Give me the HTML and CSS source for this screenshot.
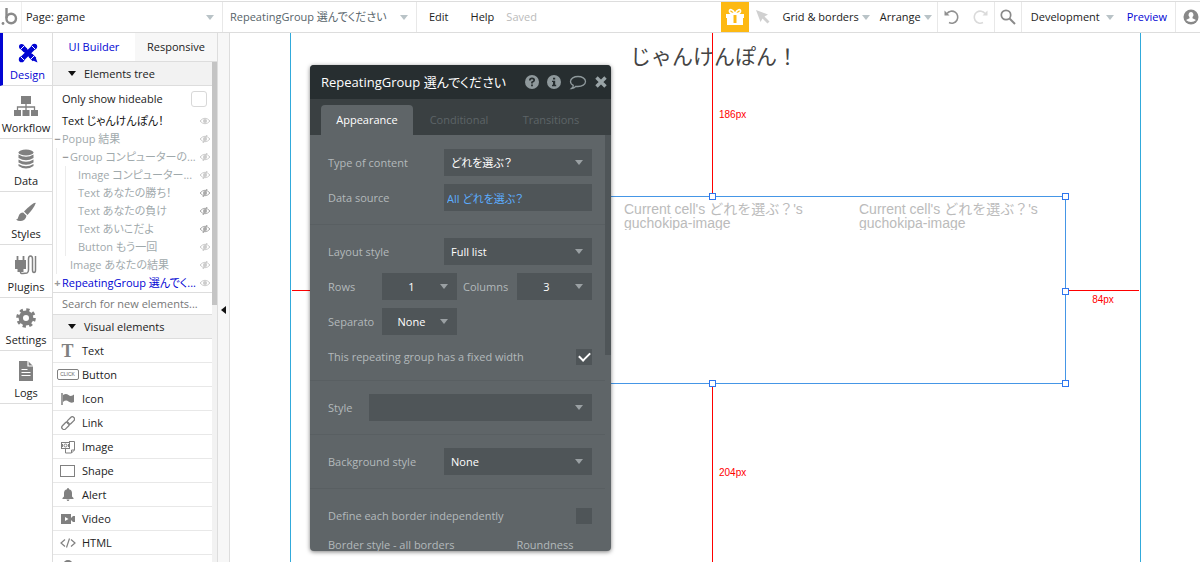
FILE: index.html
```
<!DOCTYPE html>
<html lang="ja">
<head>
<meta charset="utf-8">
<title>Page: game</title>
<link rel="stylesheet" href="styles.css">
</head>
<body>
<svg class="defs" width="0" height="0" aria-hidden="true">
  <symbol id="eye" viewBox="0 0 12 8"><path d="M1 4Q6-1.500 11 4Q6 9.500 1 4Z" fill="none" stroke="currentColor"/><circle cx="6" cy="4" r="2" fill="currentColor"/></symbol>
  <symbol id="eye-off" viewBox="0 0 12 8"><path d="M1 4Q6-1.500 11 4Q6 9.500 1 4Z" fill="none" stroke="currentColor"/><circle cx="6" cy="4" r="2" fill="currentColor"/><path d="M4 8L8 0" stroke="currentColor" stroke-width="1.300"/></symbol>
</svg>

<header class="topbar">
  <a class="logo" href="#" aria-label="Home"><svg width="18" height="20" viewBox="0 0 18 20"><path d="M6.500 1V11" stroke="#8a8a8a" stroke-width="2.400" fill="none"/><circle cx="11.200" cy="11.500" r="4.800" fill="none" stroke="#8a8a8a" stroke-width="2.400"/><circle cx="3" cy="16.500" r="1.400" fill="#8a8a8a"/></svg></a>
  <label class="pick pick-page"><select aria-label="Page"><option>Page: game</option></select></label>
  <label class="pick pick-element"><select aria-label="Element"><option>RepeatingGroup 選んでください</option></select></label>
  <nav class="menu">
    <button type="button">Edit</button>
    <button type="button">Help</button>
    <span class="saved">Saved</span>
  </nav>
  <button class="gift" type="button" aria-label="Gifts"><svg width="20" height="18" viewBox="0 0 20 18"><path d="M1 6h18v4h-1v7H2v-7H1z" fill="#fff"/><path d="M8.500 7h3v8h-3z" fill="#fdb913"/><path d="M10 6C8 1 4 .500 4.500 3.500 5 6 8 5.500 10 6ZM10 6C12 1 16 .500 15.500 3.500 15 6 12 5.500 10 6Z" fill="none" stroke="#fff" stroke-width="1.600"/></svg></button>
  <button class="tool pointer" type="button" aria-label="Pointer"><svg width="14" height="14" viewBox="0 0 14 14"><path d="M0 0L12 4.500 8.500 6.500 13.500 11.500 11.500 13.500 6.500 8.500 4.500 12Z" fill="#d0d0d0"/></svg></button>
  <button class="drop" type="button">Grid &amp; borders</button>
  <button class="drop" type="button">Arrange</button>
  <div class="group history">
    <button class="tool" type="button" aria-label="Undo"><svg width="16" height="16" viewBox="0 0 16 16"><path d="M3 4.500A6 6 0 1 1 5 13.500" fill="none" stroke="#909090" stroke-width="1.600"/><path d="M.500 1.500V6.500H5.500Z" fill="#909090"/></svg></button>
    <button class="tool" type="button" aria-label="Redo"><svg width="16" height="16" viewBox="0 0 16 16"><path d="M13 4.500A6 6 0 1 0 11 13.500" fill="none" stroke="#dadada" stroke-width="1.600"/><path d="M15.500 1.500V6.500H10.500Z" fill="#dadada"/></svg></button>
  </div>
  <div class="group search"><button class="tool" type="button" aria-label="Search"><svg width="16" height="16" viewBox="0 0 16 16"><circle cx="6" cy="6" r="4.700" fill="none" stroke="#8a8a8a" stroke-width="1.700"/><path d="M9.500 9.500L15 15" stroke="#8a8a8a" stroke-width="2"/></svg></button></div>
  <div class="group deploy"><button class="drop" type="button">Development</button><a class="preview" href="#">Preview</a></div>
  <div class="group account"><button class="tool" type="button" aria-label="Account"><svg width="16" height="16" viewBox="0 0 16 16"><circle cx="8" cy="8" r="7.500" fill="#888"/><path d="M8 3a2.600 2.800 0 0 1 1.500 5V9.200L13 11Q11 13 8 13T3 11L6.500 9.200V8A2.600 2.800 0 0 1 8 3Z" fill="#fff"/></svg></button></div>
</header>

<div class="workspace">
  <nav class="rail">
    <a class="active" href="#"><svg width="20" height="20" viewBox="0 0 20 20"><path d="M3.500 3.500L16.500 16.500" stroke="#0205d3" stroke-width="5"/><path d="M16.500 3.500L3.500 16.500" stroke="#fff" stroke-width="7"/><path d="M16 4L4 16" stroke="#0205d3" stroke-width="5"/><path d="M6 6L14 14" stroke="#0205d3" stroke-width="4.500"/><path d="M14 17L19.500 19.500 17.500 14Z" fill="#0205d3"/><circle cx="3.600" cy="3.600" r="2.600" fill="#0205d3"/><circle cx="16.400" cy="3.600" r="2.800" fill="#0205d3"/><circle cx="3.600" cy="16.400" r="2.800" fill="#0205d3"/><path d="M3 6L6 3M14 3L17 6M3 14L6 17M13 16L16 13" stroke="#fff"/></svg>Design</a>
    <a href="#"><svg width="24" height="20" viewBox="0 0 24 20"><path d="M7 0h10v8H7zM0 14h7v6H0zM8.500 14h7v6h-7zM17 14h7v6h-7z" fill="#808080"/><path d="M12 8V14M3.500 14V11H20.500V14" fill="none" stroke="#808080" stroke-width="1.300"/></svg>Workflow</a>
    <a href="#"><svg width="16" height="20" viewBox="0 0 16 20"><ellipse cx="8" cy="3.500" rx="7.500" ry="3" fill="#808080"/><path d="M.500 5.500Q8 10 15.500 5.500V9Q8 13.500 .500 9ZM.500 10.500Q8 15 15.500 10.500V13.500Q8 18 .500 13.500ZM.500 15Q8 19.500 15.500 15V17Q8 22 .500 17Z" fill="#808080"/></svg>Data</a>
    <a href="#"><svg width="20" height="20" viewBox="0 0 20 20"><path d="M19.800 1Q18-.500 8 9.500L11.500 13Q18 6 19.800 1Z" fill="#808080"/><path d="M7.200 10.500L10.500 13.800Q9.500 18.500 5 19 2 19.300 0 17.500 2.200 17 2.500 14.500 3.500 10.500 7.200 10.500Z" fill="#808080"/></svg>Styles</a>
    <a href="#"><svg width="22" height="20" viewBox="0 0 22 20"><path d="M2.500 1v5M8.500 1v5" stroke="#808080" stroke-width="1.800"/><path d="M0 5h11v9H8.500v3h-6v-3H0z" fill="#808080"/><path d="M5.500 17Q5.500 19 8 18.500L12 18Q13.500 17.500 13.500 15V4Q13.500 1 15.500 1T17.500 4V15Q17.500 17.500 19 17.500T20.500 15V1" fill="none" stroke="#808080" stroke-width="1.500"/></svg>Plugins</a>
    <a href="#"><svg width="20" height="20" viewBox="0 0 20 20"><circle cx="10" cy="10" r="5.200" fill="none" stroke="#808080" stroke-width="4.400"/><circle cx="10" cy="10" r="8.300" fill="none" stroke="#808080" stroke-width="3" stroke-dasharray="3.260 3.260"/></svg>Settings</a>
    <a href="#"><svg width="16" height="20" viewBox="0 0 16 20"><path d="M1 0h9l5 5v15H1z" fill="#808080"/><path d="M10 0v5h5M3.500 8.500h6M3.500 11.500h9M3.500 14.500h9" fill="none" stroke="#fff" stroke-width="1.200"/></svg>Logs</a>
  </nav>

  <aside class="palette">
    <div class="tabs"><button class="on" type="button">UI Builder</button><button type="button">Responsive</button></div>
    <div class="scroller">
      <div class="content">
        <h2>Elements tree</h2>
        <label class="hideable">Only show hideable<input type="checkbox"></label>
        <ul class="tree">
          <li class="visible"><span>Text じゃんけんぽん！</span><svg class="eye"><use href="#eye"/></svg></li>
          <li><i>−</i><span>Popup 結果</span><svg class="eye"><use href="#eye-off"/></svg></li>
          <li class="d1"><i>−</i><span>Group コンピューターの...</span><svg class="eye"><use href="#eye-off"/></svg></li>
          <li class="d2"><span>Image コンピューター...</span><svg class="eye"><use href="#eye-off"/></svg></li>
          <li class="d2"><span>Text あなたの勝ち！</span><svg class="eye strong"><use href="#eye-off"/></svg></li>
          <li class="d2"><span>Text あなたの負け</span><svg class="eye strong"><use href="#eye-off"/></svg></li>
          <li class="d2"><span>Text あいこだよ</span><svg class="eye strong"><use href="#eye-off"/></svg></li>
          <li class="d2"><span>Button もう一回</span><svg class="eye"><use href="#eye-off"/></svg></li>
          <li class="d1 last"><span>Image あなたの結果</span><svg class="eye"><use href="#eye-off"/></svg></li>
          <li class="selected"><i>+</i><span>RepeatingGroup 選んでく...</span><svg class="eye"><use href="#eye"/></svg></li>
        </ul>
        <input class="find" type="text" placeholder="Search for new elements..." aria-label="Search for new elements">
        <h2>Visual elements</h2>
        <ul class="elements">
          <li><span class="glyph serif">T</span>Text</li>
          <li><span class="glyph"><b class="click">CLICK</b></span>Button</li>
          <li><span class="glyph"><svg width="14" height="12" viewBox="0 0 14 12"><path d="M1 0V12" stroke="#808080" stroke-width="1.500"/><path d="M2 2Q5 0 7.500 2T13 1.500V9Q10 10.500 7.500 8.500T2 9Z" fill="#808080"/></svg></span>Icon</li>
          <li><span class="glyph"><svg width="14" height="14" viewBox="0 0 14 14" fill="none" stroke="#808080" stroke-width="1.300"><rect x="5.500" y="2.500" width="8.500" height="4.500" rx="2.200" transform="rotate(-45 9.500 4.500)"/><rect x="0" y="7.500" width="8.500" height="4.500" rx="2.200" transform="rotate(-45 4.500 9.500)"/></svg></span>Link</li>
          <li><span class="glyph"><svg width="14" height="14" viewBox="0 0 14 14" fill="none" stroke="#808080"><path d="M8 1.500H13.500V10L10.500 13H4.500V9M10.500 13V10H13.500"/><rect x=".500" y="2.500" width="8" height="6" fill="#fff"/><circle cx="4.500" cy="5.500" r="1.500"/><path d="M1.500 4v3M7.500 4v3"/></svg></span>Image</li>
          <li><span class="glyph"><b class="shape"></b></span>Shape</li>
          <li><span class="glyph"><svg width="12" height="13" viewBox="0 0 12 13"><path d="M6 0Q7 0 7 1.200 10 2 10 5V8.500L11.500 10V11H.500V10L2 8.500V5Q2 2 5 1.200 5 0 6 0ZM4.500 11.500H7.500Q7 13 6 13T4.500 11.500Z" fill="#808080"/></svg></span>Alert</li>
          <li><span class="glyph"><svg width="14" height="12" viewBox="0 0 14 12"><path d="M0 1H10V5L12 3H14V9H12L10 7V11H0Z" fill="#808080"/><path d="M4 4L7.500 6 4 8Z" fill="#fff"/></svg></span>Video</li>
          <li><span class="glyph"><svg width="16" height="10" viewBox="0 0 16 10"><path d="M5 1.500L1 5 5 8.500M11 1.500L15 5 11 8.500M9.500 .500L6.500 9.500" fill="none" stroke="#808080" stroke-width="1.200"/></svg></span>HTML</li>
          <li><span class="glyph"><svg width="12" height="14" viewBox="0 0 12 14"><path d="M6 14Q1 8 1 5A5 5 0 0 1 11 5Q11 8 6 14Z" fill="#808080"/></svg></span>Map</li>
        </ul>
      </div>
      <div class="track"><div class="thumb"></div></div>
    </div>
  </aside>
  <button class="gutter" type="button" aria-label="Collapse panel"></button>

  <main class="canvas">
    <div class="page-frame"></div>
    <h1 class="heading">じゃんけんぽん！</h1>
    <div class="measure v top"><span>186px</span></div>
    <div class="measure v bottom"><span>204px</span></div>
    <div class="measure h left"></div>
    <div class="measure h right"><span>84px</span></div>
    <section class="repeating">
      <p class="cell second">Current cell's どれを選ぶ？'s guchokipa-image</p>
      <p class="cell">Current cell's どれを選ぶ？'s guchokipa-image</p>
      <b class="handle tc"></b><b class="handle tr"></b><b class="handle mr"></b><b class="handle br"></b><b class="handle bc"></b>
    </section>

    <section class="editor">
      <header class="editor-head">
        <h2>RepeatingGroup 選んでください</h2>
        <button type="button" aria-label="Help"><svg width="14" height="14" viewBox="0 0 14 14"><circle cx="7" cy="7" r="7" fill="#8f999c"/><path d="M4.800 5.400Q4.800 3.300 7 3.300T9.200 5.200Q9.200 6.300 7 7.300V8.500" fill="none" stroke="#272e30" stroke-width="1.700"/><path d="M6.100 9.500h1.800v1.700H6.100z" fill="#272e30"/></svg></button>
        <button type="button" aria-label="Information"><svg width="14" height="14" viewBox="0 0 14 14"><circle cx="7" cy="7" r="7" fill="#8f999c"/><path d="M6 2.700h2.200v1.900H6zM5 5.700h3.200v4.100h1v1.400H5V9.800h1V7.100H5z" fill="#272e30"/></svg></button>
        <button type="button" aria-label="Comment"><svg width="18" height="15" viewBox="0 0 18 15"><path d="M9 1.500C13 1.500 16.500 3.500 16.500 6.500S13 11.500 9 11.500Q8 11.500 7 11.300 5 13.500 2.500 13.500 4.500 12 4.300 10.400 1.500 9 1.500 6.500C1.500 3.500 5 1.500 9 1.500Z" fill="none" stroke="#8f999c" stroke-width="1.300"/></svg></button>
        <button type="button" aria-label="Close"><svg width="12" height="12" viewBox="0 0 12 12"><path d="M1.500 1.500L10.500 10.500M10.500 1.500L1.500 10.500" stroke="#9aa4a7" stroke-width="3.400"/></svg></button>
      </header>
      <div class="editor-tabs"><button class="on" type="button">Appearance</button><button type="button">Conditional</button><button type="button">Transitions</button></div>
      <div class="editor-body">
        <form class="fields">
          <fieldset>
            <div class="row"><label for="type">Type of content</label><span class="sel wide"><select id="type"><option>どれを選ぶ？</option></select></span></div>
            <div class="row"><label for="source">Data source</label><input class="source" id="source" type="text" value="All どれを選ぶ？"></div>
          </fieldset>
          <fieldset class="dense">
            <div class="row"><label for="layout">Layout style</label><span class="sel wide"><select id="layout"><option>Full list</option></select></span></div>
            <div class="row"><label class="short" for="rows">Rows</label><span class="sel small"><select id="rows"><option>1</option></select></span><label class="mid" for="cols">Columns</label><span class="sel small"><select id="cols"><option>3</option></select></span></div>
            <div class="row"><label class="short" for="sep">Separato</label><span class="sel small"><select id="sep"><option>None</option></select></span></div>
            <div class="row"><label for="fixed">This repeating group has a fixed width</label><input class="check" id="fixed" type="checkbox" checked></div>
          </fieldset>
          <fieldset>
            <div class="row"><label class="tiny" for="style">Style</label><span class="sel full"><select id="style"><option></option></select></span></div>
          </fieldset>
          <fieldset>
            <div class="row"><label for="bg">Background style</label><span class="sel wide"><select id="bg"><option>None</option></select></span></div>
          </fieldset>
          <fieldset>
            <div class="row"><label for="borders">Define each border independently</label><input class="check" id="borders" type="checkbox"></div>
            <div class="captions"><span>Border style - all borders</span><span class="round">Roundness</span></div>
          </fieldset>
        </form>
        <div class="editor-track"><div class="editor-thumb"></div></div>
      </div>
    </section>
  </main>
</div>
</body>
</html>
```
FILE: styles.css
```
* { box-sizing: border-box; }
body {
  margin: 0;
  padding-top: 1px;
  height: 100vh;
  display: flex;
  flex-direction: column;
  overflow: hidden;
  background: #fff;
  color: #222;
  font: 11px/16px "Open Sans", "Noto Sans CJK JP", sans-serif;
  font-feature-settings: "palt";
}
button, input, select {
  font: inherit;
  font-feature-settings: inherit;
  color: inherit;
  margin: 0;
  padding: 0;
  border: 0;
  border-radius: 0;
  background: none;
  appearance: none;
}
a { color: inherit; text-decoration: none; }
h1, h2, p, ul, fieldset { margin: 0; padding: 0; border: 0; font-weight: 400; }
ul { list-style: none; }
svg { display: block; flex: none; }
.defs { position: absolute; }

/* top bar */
.topbar {
  display: flex;
  align-items: stretch;
  flex: none;
  height: 32px;
  border-top: 1px solid #ddd;
  border-bottom: 1px solid #ddd;
}
.logo { width: 22px; flex: none; display: flex; align-items: center; border-right: 1px solid #eee; }
.pick { display: grid; align-items: center; border-right: 1px solid #e8e8e8; flex: none; }
.pick select { grid-area: 1 / 1; padding-left: 4px; width: 100%; }
.pick::after, .drop::after, .sel::after {
  content: "";
  border: 4px solid transparent;
  border-top: 5px solid #b9c3c7;
  border-bottom: 0;
}
.pick::after { grid-area: 1 / 1; justify-self: end; margin-right: 8px; }
.pick-page { width: 201px; }
.pick-element { width: 194px; color: #57646a; }
.pick-element select { padding-left: 7px; }
.menu { flex: 1; display: flex; align-items: center; gap: 22px; padding-left: 12px; }
.saved { color: #bbb; margin-left: -10px; }
.gift { width: 28px; background: #fdb913; display: grid; place-items: center; }
.tool { display: grid; place-items: center; }
.pointer { width: 29px; }
.drop { display: flex; align-items: center; gap: 3px; padding: 0 5px; }
.group { display: flex; align-items: center; border-left: 1px solid #e8e8e8; padding: 0 5px; }
.history { gap: 12px; padding: 0 6px; }
.deploy { padding: 0 8px 0 4px; }
.deploy .drop { gap: 6px; }
.preview { color: #0205d3; padding-left: 8px; }
.account { padding: 0 1px 0 7px; }

.workspace { flex: 1; min-height: 0; display: flex; }

/* left rail */
.rail { width: 53px; flex: none; border-right: 1px solid #ddd; }
.rail a {
  height: 53px;
  display: flex;
  flex-direction: column;
  align-items: center;
  gap: 4px;
  padding-top: 10px;
  border-bottom: 1px solid #ddd;
}
.rail .active { color: #0205d3; border-left: 3px solid #0205d3; }

/* element palette */
.palette { width: 165px; flex: none; display: flex; flex-direction: column; border-right: 1px solid #ddd; }
.tabs { display: flex; height: 28px; flex: none; }
.tabs button { flex: 1; background: #f7f7f7; }
.tabs .on { background: #fff; color: #0205d3; }
.scroller { flex: 1; min-height: 0; display: flex; overflow: hidden; border-top: 1px solid #ddd; }
.content { flex: 1; min-width: 0; }
.content h2 {
  display: flex;
  align-items: center;
  gap: 8px;
  height: 24px;
  padding-left: 15px;
  font-size: 11px;
  background: #f2f2f2;
  border-bottom: 1px solid #ddd;
}
.content h2::before { content: ""; border: 4px solid transparent; border-top: 5px solid #111; border-bottom: 0; }
.hideable { display: flex; align-items: center; justify-content: space-between; height: 26px; padding: 0 5px 0 9px; }
.hideable input { width: 16px; height: 16px; border: 1px solid #d8d8d8; border-radius: 3px; }
.tree { color: #9fa9ac; border-bottom: 1px solid #ddd; }
.tree li { display: flex; align-items: center; height: 18px; padding: 0 1px 0 9px; white-space: nowrap; }
.tree li span { flex: 1; }
.tree i { width: 9px; margin-left: -9px; font-style: normal; font-weight: 700; text-align: center; color: #999; }
.tree .d1 { margin-left: 3px; padding-left: 13px; border-left: 1px solid #ececec; }
.tree .d2 {
  margin-left: 3px;
  padding-left: 21px;
  border-left: 1px solid #ececec;
  background: linear-gradient(#ececec, #ececec) 8px 0 / 1px 100% no-repeat;
}
.tree .visible { color: #111; }
.tree .selected { color: #0205d3; }
.eye { width: 12px; height: 8px; color: #ccc; }
.tree .strong { color: #aaa; }
.find { display: block; width: 100%; height: 22px; padding-left: 9px; border-bottom: 1px solid #ddd; }
.find::placeholder { color: #777; opacity: 1; }
.elements li { display: flex; align-items: center; height: 24px; border-bottom: 1px solid #e8e8e8; }
.glyph { width: 29px; display: grid; place-items: center; flex: none; }
.serif { font: 700 18px/20px "Liberation Serif", serif; color: #808080; }
.click { border: 1px solid #808080; border-radius: 2px; width: 22px; height: 11px; font: 5px/9px "Liberation Sans", sans-serif; text-align: center; color: #666; }
.shape { width: 15px; height: 12px; border: 1px solid #808080; }
.track { width: 5px; flex: none; background: #f2f2f2; }
.thumb { height: 55%; max-height: 243px; background: #c4c4c4; }
.gutter { width: 12px; flex: none; background: #f7f7f7; border-right: 1px solid #ddd; display: flex; align-items: center; padding-left: 3px; }
.gutter::before { content: ""; border: 4px solid transparent; border-right: 5px solid #111; border-left: 0; margin-bottom: -24px; }

/* page canvas */
.canvas { flex: 1; min-width: 0; position: relative; overflow: hidden; }
.page-frame { position: absolute; inset: 0 59px 0 60px; border: solid #31aadb; border-width: 0 1px; }
.heading { position: absolute; left: 400px; top: 7px; font-size: 21px; line-height: 32px; font-feature-settings: normal; color: #444; }
.measure { position: absolute; color: #f00; font: 10px/12px "Liberation Sans", sans-serif; }
.v { left: 482px; border-left: 1px solid #f00; padding-left: 6px; display: flex; align-items: center; }
.v.top { top: 0; height: 164px; }
.v.bottom { top: 351px; bottom: 0; }
.h { border-top: 1px solid #f00; top: 257px; text-align: center; padding-top: 3px; }
.h.left { left: 62px; width: 68px; }
.h.right { left: 837px; width: 72px; }
.repeating {
  position: absolute;
  left: 129px;
  top: 163px;
  width: 707px;
  height: 188px;
  border: 1px solid #4596e6;
  display: grid;
  grid-template-columns: repeat(3, 1fr);
}
.cell { padding: 5px 20px 0 29px; height: 33px; overflow: hidden; font: 14px/14px "Liberation Sans", "Noto Sans CJK JP", sans-serif; color: #bbb; }
.second { grid-column: 2; }
.handle { position: absolute; width: 7px; height: 7px; border: 1px solid #2f76ee; background: #fff; }
.tc, .tr { top: -4px; }
.bc, .br { bottom: -4px; }
.tc, .bc { left: 349px; }
.tr, .mr, .br { right: -4px; }
.mr { top: 91px; }

/* property editor */
.editor {
  position: absolute;
  left: 80px;
  top: 32px;
  bottom: 11px;
  width: 301px;
  display: flex;
  flex-direction: column;
  overflow: hidden;
  border-radius: 4px;
  background: #5f6568;
  color: #b3b9bb;
  box-shadow: 0 1px 4px rgba(0, 0, 0, .5);
}
.editor-head { display: flex; align-items: center; gap: 8px; flex: none; height: 34px; padding: 0 4px 0 11px; background: #272e30; color: #fff; }
.editor-head h2 { flex: 1; font-size: 13px; white-space: nowrap; }
.editor-tabs { display: flex; align-items: flex-end; flex: none; height: 36px; padding: 0 11px; background: #3a4042; color: #5d6467; }
.editor-tabs button { width: 92px; height: 30px; }
.editor-tabs .on { background: #5f6568; color: #fff; border-radius: 4px 4px 0 0; }
.editor-body { flex: 1; min-height: 0; display: flex; }
.fields { flex: 1; min-width: 0; padding-top: 1px; }
.fields fieldset { display: flex; flex-direction: column; gap: 8px; padding: 13px 13px 13px 18px; border-bottom: 1px solid #595f62; }
.fields .dense { padding-bottom: 10px; }
.row { display: flex; align-items: center; justify-content: space-between; height: 27px; }
.sel { display: grid; align-items: center; height: 27px; background: #4f5558; color: #fff; }
.sel select { grid-area: 1 / 1; width: 100%; height: 27px; padding-left: 7px; }
.sel::after { grid-area: 1 / 1; justify-self: end; margin-right: 9px; border-top-color: #9aa0a3; }
.wide, .source { width: 148px; }
.source { height: 27px; padding-left: 3px; background: #4f5558; color: #5cadff; }
.small { width: 75px; }
.small select { padding: 0 16px 0 0; text-align: center; text-align-last: center; }
.short { width: 54px; }
.short + .small { margin-right: auto; }
.mid { width: 54px; }
.full { flex: 1; }
.tiny { width: 41px; }
.check { width: 16px; height: 16px; background: #4f5558; display: grid; place-items: center; }
.check:checked::before { content: ""; width: 9px; height: 5px; border: solid #fff; border-width: 0 0 2px 2px; transform: translateY(-1px) rotate(-45deg); }
.captions { display: flex; }
.round { margin-left: 62px; }
.editor-track { width: 6px; flex: none; }
.editor-thumb { height: 53%; background: #4f5558; }
```
